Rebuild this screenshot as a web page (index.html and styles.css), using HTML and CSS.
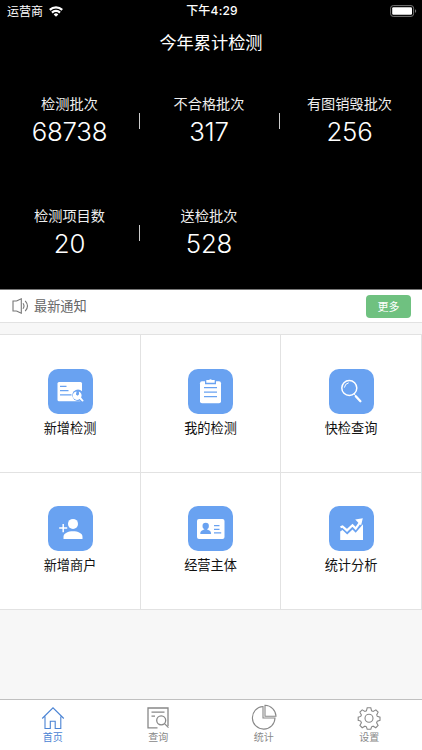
FILE: index.html
```html
<!DOCTYPE html>
<html lang="zh-CN">
<head>
<meta charset="UTF-8" />
<meta name="viewport" content="width=device-width, initial-scale=1" />
<title>首页</title>
<link rel="stylesheet" href="styles.css">
</head>
<body>

<!-- Header -->
<header class="top">
  <div class="statusbar">
    <div class="carrier">
      <span>运营商</span>
      <svg width="14" height="11" viewBox="0 0 14 11" fill="none" stroke="#fff" stroke-width="2.2">
        <path d="M.8 3.9a9 9 0 0 1 12.4 0M3 6.6a5.7 5.7 0 0 1 8 0" />
        <path d="M7 10.8 4.7 8.4a3.3 3.3 0 0 1 4.6 0z" fill="#fff" stroke="none" />
      </svg>
    </div>
    <div class="time">下午4:29</div>
    <svg class="battery" width="27" height="12" viewBox="0 0 27 12">
      <rect x=".6" y=".6" width="23" height="10.8" rx="2.6" fill="none" stroke="#777" />
      <rect x="2.2" y="2.2" width="19.8" height="7.6" rx="1.2" fill="#fff" />
      <path d="M25 4.2c1.6.5 1.6 3.1 0 3.6z" fill="#777" />
    </svg>
  </div>
  <h1 class="title">今年累计检测</h1>
  <div class="stats">
    <div class="stat line"><span>检测批次</span><b>68738</b></div>
    <div class="stat line"><span>不合格批次</span><b>317</b></div>
    <div class="stat"><span>有图销毁批次</span><b>256</b></div>
    <div class="stat line"><span>检测项目数</span><b>20</b></div>
    <div class="stat"><span>送检批次</span><b>528</b></div>
  </div>
</header>

<!-- Notice -->
<div class="notice">
  <svg width="17" height="16" viewBox="0 0 17 16" fill="none" stroke="#777" stroke-width="1.1">
    <path d="M4.5 3H1v10h3.5M4.5 3 9.3.8v14.4L4.5 13" />
    <path d="M11 5.2q2 2.8 0 5.6M13.2 2.8q4.6 5.2 0 10.4" />
  </svg>
  <span class="notice-text">最新通知</span>
  <button class="more">更多</button>
</div>

<!-- Menu -->
<main class="menu">
  <div class="item">
    <svg class="icon" viewBox="0 0 45 45">
      <rect x="9.5" y="13" width="24.5" height="19.3" rx="1.5" fill="#fff" />
      <path d="M12 17.4h6.5M12 21.6h8.5M12 25.9h11.5" stroke="#69a2f1" stroke-width="1.2" />
      <circle cx="30" cy="26.3" r="5.7" fill="#69a2f1" />
      <path d="m29 24 6 7.7" stroke="#69a2f1" stroke-width="5" />
      <path d="M28.6 22.6a4.2 4.2 0 1 0 3 7.4l2.3 2.3q1.2.6 1.8-.6l-2.6-3.2a4.2 4.2 0 0 0-2.3-6l.3 2.7-1.5 1.5-1.7-1.2z" fill="#fff" />
    </svg>
    <span>新增检测</span>
  </div>
  <div class="item">
    <svg class="icon" viewBox="0 0 45 45">
      <rect x="12" y="12.3" width="21" height="22" rx="2" fill="#fff" />
      <path d="M17 11v4.2h11V11" fill="#69a2f1" />
      <path d="M18.3 11h2.7q1.5-1.5 3 0h2.7v2.8h-8.4z" fill="#fff" />
      <path d="M16 18.7h13M16 23.2h13M16 27.7h13" stroke="#69a2f1" stroke-width="1.3" />
    </svg>
    <span>我的检测</span>
  </div>
  <div class="item">
    <svg class="icon" viewBox="0 0 45 45" fill="none" stroke="#fff">
      <circle cx="20.3" cy="19" r="7.5" stroke-width="1.5" />
      <path d="M15.4 18.6q.5-4 4.3-4.8" stroke-width="1" />
      <path d="m25.2 25 1.2 1.3" stroke-width="1" />
      <path d="m26.8 27.2 4.6 5" stroke-width="2.3" stroke-linecap="round" />
    </svg>
    <span>快检查询</span>
  </div>
  <div class="item low">
    <svg class="icon" viewBox="0 0 45 45" fill="#fff">
      <circle cx="25" cy="17.9" r="5" />
      <path d="M15.5 33v-2.3c0-7.4 19-7.4 19 0V33z" />
      <path d="M11.2 22h8M15.2 18v8.3" stroke="#fff" stroke-width="1.5" />
    </svg>
    <span>新增商户</span>
  </div>
  <div class="item low">
    <svg class="icon" viewBox="0 0 45 45">
      <rect x="9" y="13" width="27.5" height="20" rx="2" fill="#fff" />
      <circle cx="17.7" cy="20" r="3.2" fill="#69a2f1" />
      <path d="M16.3 21h2.8v2.4c2.5 1 4 1.2 4 4.6H12.3c0-3.4 1.5-3.6 4-4.6z" fill="#69a2f1" />
      <path d="M26 19.7h5.5M26 23.3h5.5M26 26.9h7.2" stroke="#69a2f1" stroke-width="1.3" />
    </svg>
    <span>经营主体</span>
  </div>
  <div class="item low">
    <svg class="icon" viewBox="0 0 45 45">
      <path d="M11.2 25.5 13.5 24l4.7 4.6 5.3-5.1 3.2 3.3L34 18.3V34H11.2z" fill="#fff" />
      <path d="m11.5 21.2 2-.8 4.5 4 5.5-5.2 3.2 3.4 4.5-6.4" fill="none" stroke="#fff" stroke-width="2.2" />
      <path d="m26.2 13.6 7.6-1.4-1.7 7.2z" fill="#fff" />
    </svg>
    <span>统计分析</span>
  </div>
</main>

<!-- Tabs -->
<nav class="tabbar">
  <div class="tab active">
    <svg width="24" height="24" viewBox="0 0 24 24">
      <path d="M1.2 12.5 12 1.8l10.8 10.7M4 10.5v12h5.3v-7.3h4.9v7.3h5.6v-12" />
    </svg>
    <span>首页</span>
  </div>
  <div class="tab">
    <svg class="search" width="24" height="24" viewBox="0 0 24 24">
      <path d="M11.5 21.8H2V2h20v18M5.5 6.2h13M5.5 10.2H9" />
      <circle cx="15.2" cy="14.3" r="4.5" />
      <path d="m18.5 17.6 4 4" />
    </svg>
    <span>查询</span>
  </div>
  <div class="tab">
    <svg width="26" height="26" viewBox="0 0 26 26">
      <path d="M12 2.5A11.3 11.3 0 1 0 24 14H12z" />
      <path d="M14 1.3v10.9h11A11.2 11.2 0 0 0 14 1.3z" />
    </svg>
    <span>统计</span>
  </div>
  <div class="tab">
    <svg width="24" height="24" viewBox="0 0 24 24">
      <path d="M10.2 1.8h3.6l.8 3 1.6.7 2.7-1.6 2.2 2.3-1.4 2.7.6 1.5 2.7.8v3.1l-2.7.8-.7 1.6 1.5 2.7-2.3 2.3-2.7-1.5-1.5.6-.8 2.4h-3.6l-.8-2.4-1.5-.6-2.7 1.5-2.3-2.3 1.5-2.7-.7-1.6-2.5-.8v-3.1l2.5-.8.7-1.5-1.5-2.7 2.3-2.3 2.7 1.6 1.5-.7z" />
      <circle cx="12" cy="12.2" r="4" />
    </svg>
    <span>设置</span>
  </div>
</nav>

</body>
</html>
```
FILE: styles.css
```css
* {
  box-sizing: border-box;
}
body {
  font-family: "Noto Sans CJK SC", sans-serif;
  margin: 0; background: #f7f7f7;
  height: 750px;
  display: flex;
  flex-direction: column;
  overflow: hidden;
}
svg {
  display: block;
  flex: none;
}

/* Header */
.top {
  height: 290px;
  background: #000;
  color: #fff;
  border-bottom: 1px solid #777;
}
.statusbar {
  height: 22px;
  padding: 0 5px 0 7px;
  display: grid;
  grid-template-columns: 1fr auto 1fr;
  align-items: center;
  font-size: 12px;
  line-height: 22px;
}
.carrier {
  display: flex;
  align-items: center;
  gap: 6px;
}
.time {
  font-family: Inter, "Noto Sans CJK SC", sans-serif;
  font-weight: 500;
  letter-spacing: 0.2px;
}
.battery {
  justify-self: end;
}
.title {
  margin: 0;
  height: 41px;
  line-height: 40px;
  text-align: center;
  font-size: 17.2px;
  font-weight: 400;
}
.stats {
  display: grid;
  grid-template-columns: 139px 140px 141px;
  grid-auto-rows: 112px;
}
.stat {
  display: flex;
  flex-direction: column;
  align-items: center;
  padding-top: 29px;
  position: relative;
}
.stat span {
  font-size: 14.2px;
  line-height: 22px;
  color: #eee;
}
.stat b {
  font-family: Inter, "Liberation Sans", sans-serif;
  font-weight: 300;
  font-size: 25.8px;
  line-height: 34px;
  margin-top: 1px;
  letter-spacing: -0.2px;
}
.line::after {
  content: "";
  position: absolute;
  right: -1px;
  top: 50px;
  width: 1px;
  height: 16px;
  background: #ccc;
}

/* Notice */
.notice {
  height: 33px;
  background: #fff;
  border-bottom: 1px solid #e2e2e2;
  display: flex;
  align-items: center;
  padding: 0 11px 0 12px;
}
.notice-text {
  flex: 1;
  margin-left: 5px;
  font-size: 13.2px;
  line-height: 20px;
  padding-bottom: 1px;
  color: #666;
}
.more {
  width: 45px;
  height: 23px;
  padding: 0 0 1px;
  border: none;
  border-radius: 4px;
  background: #6fc180;
  color: #fff;
  font-family: inherit;
  font-size: 11px;
}

/* Menu */
.menu {
  margin-top: 11px;
  display: grid;
  grid-template-columns: 141px 140px 141px;
  grid-template-rows: 138px 137px;
  border-top: 1px solid #e2e2e2;
}
.item {
  background: #fff;
  border-right: 1px solid #e2e2e2;
  border-bottom: 1px solid #e2e2e2;
  display: flex;
  flex-direction: column;
  align-items: center;
  padding-top: 34px;
}
.item.low {
  padding-top: 33px;
}
.icon {
  width: 45px;
  height: 45px;
  border-radius: 10px;
  background: #69a2f1;
}
.item span {
  margin-top: 3px;
  font-size: 13.2px;
  line-height: 22px;
  color: #111;
}

/* Tabs */
.tabbar {
  margin-top: auto;
  height: 51px;
  background: #fff;
  border-top: 1px solid #c0c0c0;
  display: grid;
  grid-template-columns: repeat(4, 1fr);
}
.tab {
  display: flex;
  flex-direction: column;
  align-items: center;
  justify-content: flex-end;
  padding-bottom: 6px;
  color: #888;
}
.tab svg {
  fill: none;
  stroke: currentColor;
  stroke-width: 1.1;
}
.tab .search {
  stroke-width: 1.3;
}
.tab span {
  font-size: 10px;
  line-height: 14px;
}
.tab.active {
  color: #4a83d4;
}
```
